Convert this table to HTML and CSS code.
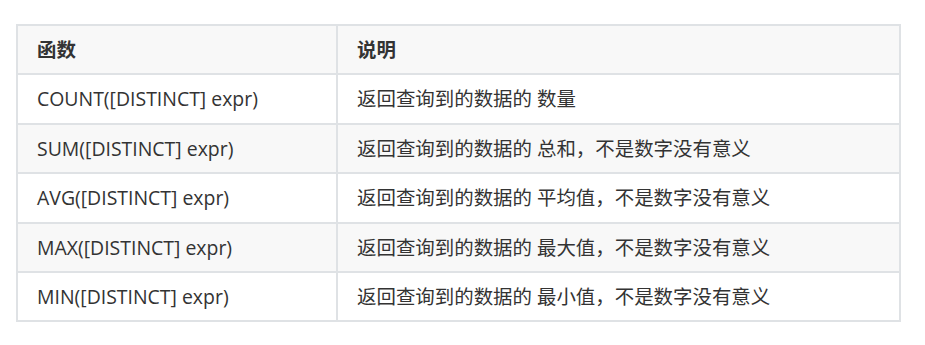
FILE: index.html
```html
<!DOCTYPE html>
<html lang="zh-CN">
<head>
<meta charset="utf-8">
<title>聚合函数</title>
<link rel="stylesheet" href="styles.css">
</head>
<body>
<div class="page">
  <table class="fn-table">
    <thead>
      <tr><th class="col-fn">函数</th><th>说明</th></tr>
    </thead>
    <tbody>
      <tr><td>COUNT([DISTINCT] expr)</td><td>返回查询到的数据的 数量</td></tr>
      <tr><td>SUM([DISTINCT] expr)</td><td>返回查询到的数据的 总和，不是数字没有意义</td></tr>
      <tr><td>AVG([DISTINCT] expr)</td><td>返回查询到的数据的 平均值，不是数字没有意义</td></tr>
      <tr><td>MAX([DISTINCT] expr)</td><td>返回查询到的数据的 最大值，不是数字没有意义</td></tr>
      <tr><td>MIN([DISTINCT] expr)</td><td>返回查询到的数据的 最小值，不是数字没有意义</td></tr>
    </tbody>
  </table>
</div>
</body>
</html>
```
FILE: styles.css
```css
html, body {
  margin: 0;
  padding: 0;
  background: #ffffff;
}
.page {
  padding: 24px 0 0 16px;
}
.fn-table {
  border-collapse: collapse;
  width: 885px;
  font-family: "Open Sans", "Noto Sans CJK SC", sans-serif;
  font-size: 19.45px;
  color: #333333;
}
.fn-table th,
.fn-table td {
  border: 2px solid #dfe2e5;
  padding: 10px 19px 10px 19px;
  line-height: 27.4px;
  text-align: left;
  vertical-align: middle;
}
.fn-table th {
  font-weight: bold;
  background: #f8f8f8;
}
.fn-table .col-fn {
  width: 280px;
}
.fn-table tbody tr:nth-child(even) td {
  background: #f8f8f8;
}
```
